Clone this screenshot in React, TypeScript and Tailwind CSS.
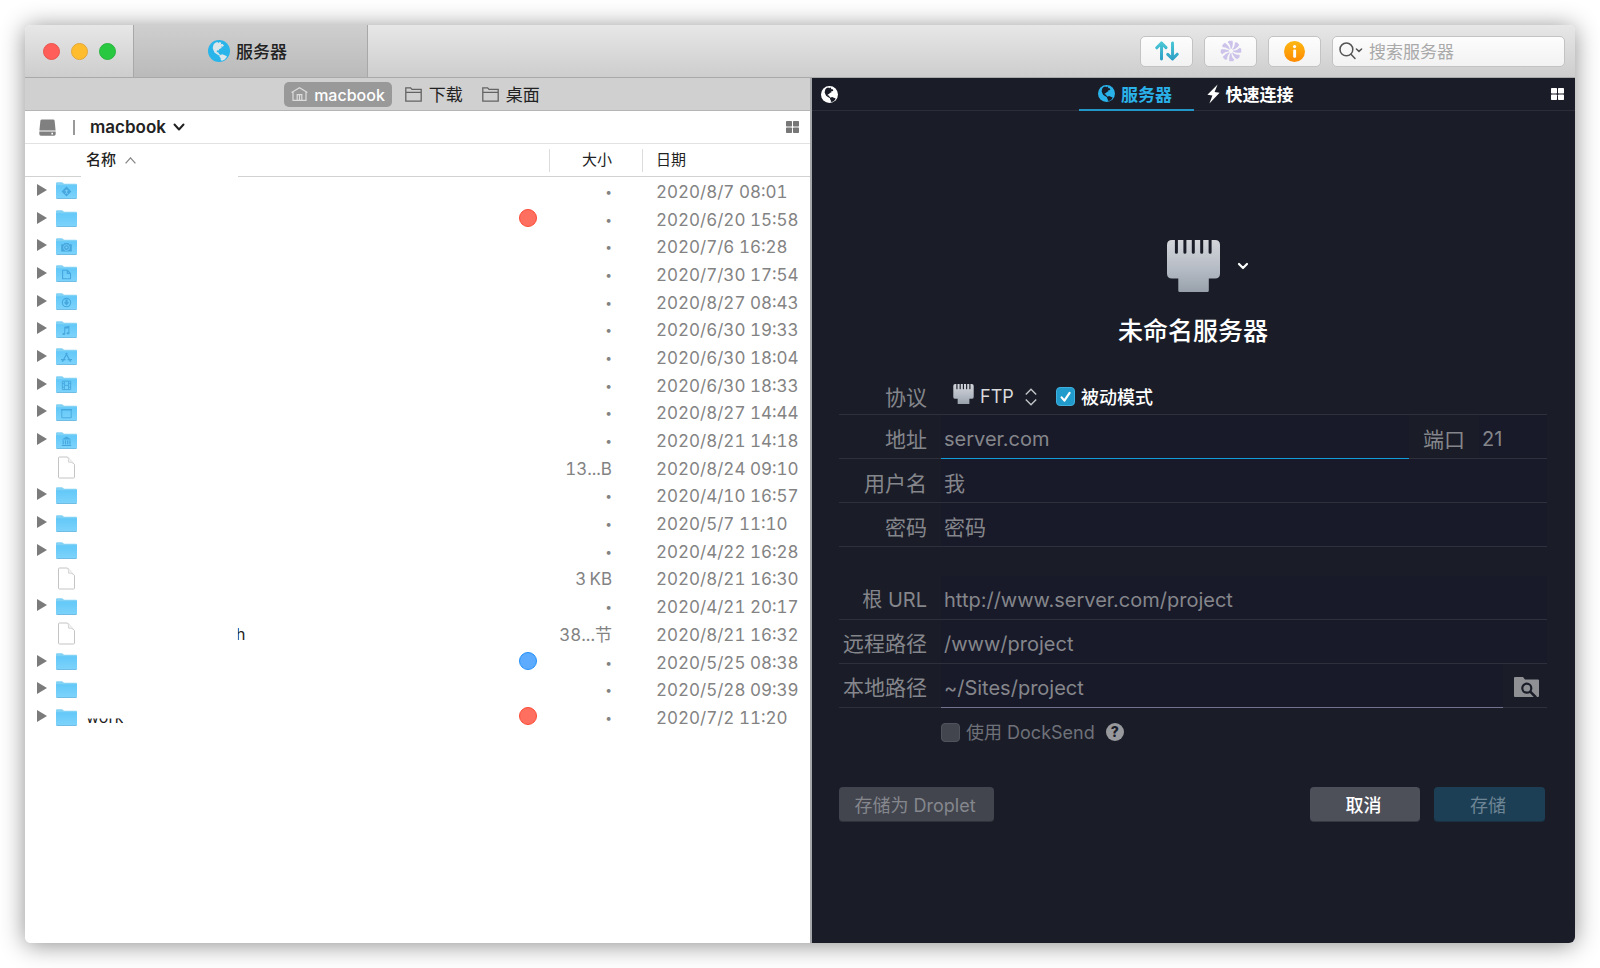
import { useId, type ReactNode } from "react";

type Glyph =
  | "public" | "pictures" | "documents" | "downloads" | "music"
  | "apps" | "movies" | "desktop" | "library";

type Entry = {
  kind: "folder" | "file";
  glyph?: Glyph;
  tag?: "red" | "blue";
  size: string;
  date: string;
  name?: ReactNode;
};

const entries: Entry[] = [
  { kind: "folder", glyph: "public", size: "•", date: "2020/8/7 08:01" },
  { kind: "folder", tag: "red", size: "•", date: "2020/6/20 15:58" },
  { kind: "folder", glyph: "pictures", size: "•", date: "2020/7/6 16:28" },
  { kind: "folder", glyph: "documents", size: "•", date: "2020/7/30 17:54" },
  { kind: "folder", glyph: "downloads", size: "•", date: "2020/8/27 08:43" },
  { kind: "folder", glyph: "music", size: "•", date: "2020/6/30 19:33" },
  { kind: "folder", glyph: "apps", size: "•", date: "2020/6/30 18:04" },
  { kind: "folder", glyph: "movies", size: "•", date: "2020/6/30 18:33" },
  { kind: "folder", glyph: "desktop", size: "•", date: "2020/8/27 14:44" },
  { kind: "folder", glyph: "library", size: "•", date: "2020/8/21 14:18" },
  { kind: "file", size: "13...B", date: "2020/8/24 09:10" },
  { kind: "folder", size: "•", date: "2020/4/10 16:57" },
  { kind: "folder", size: "•", date: "2020/5/7 11:10" },
  { kind: "folder", size: "•", date: "2020/4/22 16:28" },
  { kind: "file", size: "3\u2009KB", date: "2020/8/21 16:30" },
  { kind: "folder", size: "•", date: "2020/4/21 20:17" },
  {
    kind: "file",
    size: "38...节",
    date: "2020/8/21 16:32",
    name: <span className="ml-[150px] [clip-path:inset(0_0_0_20%)]">h</span>,
  },
  { kind: "folder", tag: "blue", size: "•", date: "2020/5/25 08:38" },
  { kind: "folder", size: "•", date: "2020/5/28 09:39" },
  {
    kind: "folder",
    tag: "red",
    size: "•",
    date: "2020/7/2 11:20",
    name: <span className="[clip-path:inset(56%_0_0_0)]">work</span>,
  },
];

function Globe({ className, land }: { className: string; land: string }) {
  return (
    <svg viewBox="0 0 66 66" className={className} aria-hidden="true">
      <circle cx="33" cy="33" r="33" fill="currentColor" />
      <path
        fill={land}
        d="M17 13 L22 8 L28 6 L32 9 L35 6 L40 8 L38 13 L44 12 L48 17 L44 20 L40 19 L41 24 L34 27 L31 32 L27 31 L26 37 L31 37 L33 42 L38 45 L34 47 L27 43 L20 38 L17 32 L14 24 Z"
      />
      <path fill={land} d="M36 46 L43 43 L50 46 L57 49 L54 54 L49 59 L42 62 L38 60 L38 54 L34 50 Z" />
    </svg>
  );
}

function FolderGlyph({ glyph }: { glyph: Glyph }) {
  switch (glyph) {
    case "public":
      return (
        <g>
          <path fill="#45a7de" d="M10.5 4.6 L15.4 9.5 L10.5 14.4 L5.6 9.5Z" />
          <path stroke="#7fd0fb" strokeWidth="0.8" fill="none" d="M8.8 8.8h3.4 M10.5 7.6v2.6 L9.4 12.2 M10.5 10.2 L11.7 12.2" />
        </g>
      );
    case "pictures":
      return (
        <g>
          <path fill="#45a7de" d="M5.2 6.3h2.4l1-1.3h3.8l1 1.3h2.4V13.4H5.2Z" />
          <circle cx="10.5" cy="9.6" r="2.9" fill="#45a7de" stroke="#7fd0fb" strokeWidth="0.8" />
          <circle cx="10.5" cy="9.6" r="1" fill="#7fd0fb" />
        </g>
      );
    case "documents":
      return <path fill="none" stroke="#45a7de" strokeWidth="1.1" d="M6.6 5.2h4.7l3.2 3.2v5.4H6.6Z M11.3 5.2v3.2h3.2" />;
    case "downloads":
      return (
        <g>
          <circle cx="10.5" cy="9.6" r="4.2" fill="none" stroke="#45a7de" strokeWidth="1.1" />
          <path fill="#45a7de" d="M9.4 6.4h2.2v2.8h1.8l-2.9 3.2-2.9-3.2h1.8Z" />
        </g>
      );
    case "music":
      return (
        <g fill="#45a7de">
          <path d="M8.2 5.8 L13.4 4.8 V12.2 H12.4 V7.2 L9.2 7.8 V13 H8.2Z" />
          <ellipse cx="7.8" cy="13" rx="1.5" ry="1.1" />
          <ellipse cx="12" cy="12.3" rx="1.5" ry="1.1" />
        </g>
      );
    case "apps":
      return <path fill="none" stroke="#45a7de" strokeWidth="1.3" d="M11.2 5 L6.4 13.8 M9.8 5 L14.6 13.8 M5 11.7h4.6 M11.6 11.7h4.4" />;
    case "movies":
      return (
        <path
          fill="none"
          stroke="#45a7de"
          strokeWidth="0.9"
          d="M6.3 5.2h8.4v8.4H6.3Z M8.4 5.2v8.4 M12.6 5.2v8.4 M8.4 9.4h4.2 M6.3 7.6h2 M6.3 11.2h2 M12.7 7.6h2 M12.7 11.2h2"
        />
      );
    case "desktop":
      return (
        <g>
          <path fill="none" stroke="#45a7de" strokeWidth="0.9" d="M5.8 5.6h9.4v8.2H5.8Z" />
          <path fill="#45a7de" d="M5 5h11v1.4H5Z" />
        </g>
      );
    case "library":
      return (
        <g fill="#45a7de">
          <path d="M10.5 4.6 L15.4 7.4 H5.6Z" />
          <path d="M6.6 8.2h1.2v4.4H6.6Z M8.9 8.2h1.2v4.4H8.9Z M11.1 8.2h1.2v4.4h-1.2Z M13.3 8.2h1.2v4.4h-1.2Z M5.8 13.1h9.4v1H5.8Z" />
        </g>
      );
  }
}

function FolderIcon({ glyph }: { glyph?: Glyph }) {
  const id = useId();
  return (
    <svg viewBox="0 0 21 17" className="mt-[2px] h-[17px] w-[21px]" aria-hidden="true">
      <defs>
        <linearGradient id={id} x1="0" y1="0" x2="0" y2="1">
          <stop offset="0" stopColor="#62c8f8" />
          <stop offset="1" stopColor="#7dd3fb" />
        </linearGradient>
      </defs>
      <path fill="#82d2f6" d="M0 1.3 Q0 0.3 1 0.3 H5.6 Q6.6 0.3 7.4 1.2 L8 1.7 H20 Q21 1.7 21 2.7 V6 H0Z" />
      <path fill={`url(#${id})`} d="M0 3.2 H21 V15.6 Q21 16.4 20 16.4 H1 Q0 16.4 0 15.6Z" />
      <path fill="#55aedb" d="M0 15.4 Q0.2 16 1 16 H20 Q20.8 16 21 15.4 V15.8 Q21 16.8 20 16.8 H1 Q0 16.8 0 15.8Z" />
      {glyph && <FolderGlyph glyph={glyph} />}
    </svg>
  );
}

function FileIcon() {
  return (
    <svg viewBox="0 0 21 23" className="mt-[2px] h-[23px] w-[21px]" aria-hidden="true">
      <path fill="#fff" stroke="#c4c4c4" strokeWidth="1" d="M2.5 2 Q2.5 1 3.5 1 H11.5 L18.5 8.5 V21 Q18.5 22 17.5 22 H3.5 Q2.5 22 2.5 21Z" />
      <path fill="#f4f4f4" stroke="#cfcfcf" strokeWidth="0.9" d="M11.5 1 C12.8 3 12.3 4.5 12.6 6.2 C14.8 6 16.8 6.6 18.5 8.5" />
    </svg>
  );
}

function Plug({ className }: { className: string }) {
  const id = useId();
  return (
    <svg viewBox="0 0 53 52" className={className} aria-hidden="true">
      <defs>
        <linearGradient id={id} x1="0" y1="0" x2="0" y2="1">
          <stop offset="0" stopColor="#d3d5da" />
          <stop offset="0.55" stopColor="#b6bcc5" />
          <stop offset="1" stopColor="#98a1ab" />
        </linearGradient>
      </defs>
      <path
        fill={`url(#${id})`}
        d="M5 0 H7.9 V12.4 Q7.9 13.8 9.4 13.8 T10.9 12.4 V0 H16.4 V12.4 Q16.4 13.8 17.9 13.8 T19.4 12.4 V0 H24.8 V12.4 Q24.8 13.8 26.3 13.8 T27.8 12.4 V0 H33.2 V12.4 Q33.2 13.8 34.7 13.8 T36.2 12.4 V0 H41.6 V12.4 Q41.6 13.8 43.1 13.8 T44.6 12.4 V0 H48 Q53 0 53 5 V33.5 Q53 38.5 48 38.5 H41.8 V50.5 Q41.8 52 40.3 52 H12.8 Q11.3 52 11.3 50.5 V38.5 H5 Q0 38.5 0 33.5 V5 Q0 0 5 0Z"
      />
    </svg>
  );
}

function GridIcon({ className }: { className: string }) {
  return (
    <svg viewBox="0 0 13 12" className={className} fill="currentColor" aria-hidden="true">
      <rect x="0" y="0" width="6" height="5.4" rx="0.7" />
      <rect x="7" y="0" width="6" height="5.4" rx="0.7" />
      <rect x="0" y="6.6" width="6" height="5.4" rx="0.7" />
      <rect x="7" y="6.6" width="6" height="5.4" rx="0.7" />
    </svg>
  );
}

function SmallFolder() {
  return (
    <svg viewBox="0 0 17 15" className="h-[15px] w-[17px] text-[#636363]" fill="none" stroke="currentColor" strokeWidth="1.3" aria-hidden="true">
      <path d="M0.8 14.2 V0.8 H5.6 L7 2.4 H16.2 V14.2Z M0.8 5.4 H16.2" />
    </svg>
  );
}

function TitleBar() {
  return (
    <header className="flex h-[53px] items-stretch border-b border-[#a9a9a9] bg-linear-to-b from-[#e7e7e7] to-[#cdcdcd]">
      <div className="flex w-[108px] items-center gap-[11px] pl-[18px]">
        <button aria-label="关闭" className="size-[17px] rounded-full border border-[#e9544d] bg-[#ff5f58]" />
        <button aria-label="最小化" className="size-[17px] rounded-full border border-[#e2a73a] bg-[#ffbd2e]" />
        <button aria-label="缩放" className="size-[17px] rounded-full border border-[#2bb440] bg-[#28c941]" />
      </div>
      <button className="flex w-[235px] items-center justify-center gap-[6px] border-x border-[#a8a8a8] bg-linear-to-b from-[#cfcfcf] to-[#bababa] pr-[6px] text-[17px] font-medium text-[#222]">
        <Globe className="size-[22px] text-[#29b5ea]" land="#dbe6ea" />
        <span className="pt-[3px]">服务器</span>
      </button>
      <div className="flex flex-1 items-center justify-end gap-[11px] pr-[10px]">
        <button aria-label="传输" className="grid h-[31px] w-[53px] place-items-center rounded-[5px] border border-[#c3c3c3] bg-linear-to-b from-[#fdfdfd] to-[#f2f2f2]">
          <svg viewBox="0 0 24 20" className="h-5 w-6" fill="none" strokeWidth="3" strokeLinecap="round" strokeLinejoin="round" aria-hidden="true">
            <defs>
              <linearGradient id="transfer" gradientUnits="userSpaceOnUse" x1="0" y1="0" x2="0" y2="20">
                <stop offset="0" stopColor="#4ccad6" />
                <stop offset="1" stopColor="#2b9cc4" />
              </linearGradient>
            </defs>
            <path stroke="url(#transfer)" d="M6.5 18 L6.6 2 M1.8 6.8 L6.5 2 L11 6.6 M17.5 2 L17.6 18 M12.8 13.4 L17.5 18 L22.2 13.2" />
          </svg>
        </button>
        <button aria-label="同步" className="grid h-[31px] w-[53px] place-items-center rounded-[5px] border border-[#c3c3c3] bg-linear-to-b from-[#fdfdfd] to-[#f2f2f2]">
          <svg viewBox="0 0 22 22" className="size-[22px]" fill="#cdc3ea" aria-hidden="true">
            {[0, 45, 90, 135, 180, 225, 270, 315].map((angle) => (
              <path key={angle} transform={`rotate(${angle} 11 11)`} d="M10.6 9 C10.6 6.2 9.8 4 7.8 2.4 Q8 1 9.4 0.7 L12.6 0.8 C13.2 4 12.6 6.8 11.4 9Z" />
            ))}
          </svg>
        </button>
        <button aria-label="信息" className="grid h-[31px] w-[53px] place-items-center rounded-[5px] border border-[#c3c3c3] bg-linear-to-b from-[#fdfdfd] to-[#f2f2f2]">
          <svg viewBox="0 0 21 21" className="size-[21px]" aria-hidden="true">
            <defs>
              <linearGradient id="info" x1="0" y1="0" x2="0" y2="1">
                <stop offset="0" stopColor="#fdb813" />
                <stop offset="1" stopColor="#ff8a00" />
              </linearGradient>
            </defs>
            <circle cx="10.5" cy="10.5" r="10.5" fill="url(#info)" />
            <circle cx="10.6" cy="5.6" r="1.6" fill="#fff" />
            <rect x="9.2" y="8.6" width="2.9" height="8.2" rx="1.2" fill="#fff" />
          </svg>
        </button>
        <label className="flex h-[31px] w-[233px] items-center gap-[6px] rounded-[5px] border border-[#c3c3c3] bg-linear-to-b from-[#fdfdfd] to-[#f2f2f2] pl-[6px]">
          <svg viewBox="0 0 24 18" className="h-[18px] w-6 shrink-0" fill="none" stroke="#555" strokeWidth="1.5" strokeLinecap="round" strokeLinejoin="round" aria-hidden="true">
            <circle cx="7.4" cy="7.4" r="6.4" />
            <path d="M12 12.2 L16 16.4 M17.4 7 L20 9.4 L22.6 7" />
          </svg>
          <input type="search" aria-label="搜索服务器" placeholder="搜索服务器" className="min-w-0 flex-1 bg-transparent pt-[3px] text-[17px] outline-none placeholder:text-[#a9a9a9]" />
        </label>
      </div>
    </header>
  );
}

function LocalPane() {
  return (
    <section className="flex min-w-0 flex-col border-r-2 border-[#a5a7aa] bg-white">
      <nav className="flex h-[33px] items-center justify-center gap-[13px] border-b border-[#b5b5b5] bg-[#d0d0d0] pr-[11px] text-[17px] text-[#222]">
        <button className="flex h-[25px] items-center gap-[6px] rounded-[5px] bg-[#999] px-[7px] text-[16px] font-medium text-white">
          <svg viewBox="0 0 17 14" className="h-[14px] w-[17px]" fill="none" stroke="#dcdcdc" strokeWidth="1.2" aria-hidden="true">
            <path d="M0.6 5.4 L8.5 0.8 L16.4 5.4 M2 4.8 V13.3 H15 V4.8 M6.2 13.3 V7.6 H10.8 V13.3 M8.5 8 V13" />
          </svg>
          <span className="pt-[2px]">macbook</span>
        </button>
        <button className="flex items-center gap-[7px]"><SmallFolder /><span className="pt-[3px]">下载</span></button>
        <button className="ml-[6px] flex items-center gap-[7px]"><SmallFolder /><span className="pt-[3px]">桌面</span></button>
      </nav>
      <div className="flex h-[33px] items-center border-b border-[#e2e2e2] pr-[11px] pl-[14px]">
        <svg viewBox="0 0 17 17" className="size-[17px] text-[#808080]" fill="currentColor" aria-hidden="true">
          <path d="M3 0.4 H14 Q15.4 0.4 15.6 1.8 L16.6 11.4 H0.4 L1.4 1.8 Q1.6 0.4 3 0.4Z" />
          <path fillRule="evenodd" d="M0.3 12.4 H16.7 V15 Q16.7 16.8 15 16.8 H2 Q0.3 16.8 0.3 15Z M12.4 13.8 V15.4 H14 V13.8Z" />
        </svg>
        <span className="ml-[17px] h-[15px] w-[2px] bg-[#999]" />
        <button className="ml-[15px] flex items-center gap-[7px] text-[17px] font-semibold text-[#222]">
          <span className="pt-[2px]">macbook</span>
          <svg viewBox="0 0 12 8" className="h-2 w-3" fill="none" stroke="currentColor" strokeWidth="2" strokeLinecap="round" strokeLinejoin="round" aria-hidden="true">
            <path d="M1.5 1.5 L6 6.5 L10.5 1.5" />
          </svg>
        </button>
        <button aria-label="显示方式" className="ml-auto text-[#777]">
          <GridIcon className="h-3 w-[13px]" />
        </button>
      </div>
      <table className="h-[587px] w-full table-fixed border-separate border-spacing-0">
        <colgroup>
          <col />
          <col className="w-[44px]" />
          <col className="w-[93px]" />
          <col className="w-[168px]" />
        </colgroup>
        <thead>
          <tr className="h-[33px] text-[15px] text-[#222]">
            <th scope="col" className="relative border-b border-[#d2d2d2] p-0 pl-[61px] text-left font-medium">
              <span className="flex items-center gap-[9px]">
                名称
                <svg viewBox="0 0 11 7" className="h-[7px] w-[11px]" fill="none" stroke="#888" strokeWidth="1.3" aria-hidden="true">
                  <path d="M0.6 6.4 L5.5 0.9 L10.4 6.4" />
                </svg>
              </span>
              <span className="absolute -bottom-px left-[56px] h-px w-[157px] bg-white" />
            </th>
            <td className="border-b border-[#d2d2d2] p-0" />
            <th scope="col" className="border-b border-[#d2d2d2] p-0 font-normal">
              <span className="flex h-[23px] items-center justify-end border-l border-[#dcdcdc] pr-[30px]">大小</span>
            </th>
            <th scope="col" className="border-b border-[#d2d2d2] p-0 font-normal">
              <span className="flex h-[23px] items-center border-l border-[#dcdcdc] pl-[13px]">日期</span>
            </th>
          </tr>
        </thead>
        <tbody className="text-[17px] leading-6 text-[#838383] tabular-nums">
          {entries.map((entry, index) => (
            <tr key={index}>
              <td className="p-0">
                <div className="flex h-[26px] items-center pb-[2px] pl-3 text-[#222]">
                  <span className="w-[19px]">
                    {entry.kind === "folder" && (
                      <svg viewBox="0 0 10 12" className="h-3 w-[10px]" fill="#7b7b7b" aria-hidden="true">
                        <path d="M0 0 L10 6 L0 12Z" />
                      </svg>
                    )}
                  </span>
                  {entry.kind === "folder" ? <FolderIcon glyph={entry.glyph} /> : <FileIcon />}
                  <span className="flex pt-[2px] pl-[9px] text-[16px]">{entry.name}</span>
                </div>
              </td>
              <td className="p-0 pb-[2px]">
                {entry.tag === "red" && <span className="ml-[14px] block size-[18px] rounded-full border border-[#fb4a34] bg-[#ff6f5f]" />}
                {entry.tag === "blue" && <span className="ml-[14px] block size-[18px] rounded-full border border-[#2290fa] bg-[#5cabff]" />}
              </td>
              {entry.size === "•" ? (
                <td className="p-0 pt-[2px] pr-[30px] text-right text-[12px] leading-5">•</td>
              ) : (
                <td className="p-0 pt-[2px] pr-[30px] text-right">{entry.size}</td>
              )}
              <td className="p-0 pt-[2px] pl-[14px] whitespace-nowrap">{entry.date}</td>
            </tr>
          ))}
        </tbody>
      </table>
    </section>
  );
}

function Field({ id, label, placeholder, type = "text" }: { id: string; label: string; placeholder: string; type?: string }) {
  return (
    <div className="flex h-11">
      <label htmlFor={id} className="w-[102px] shrink-0 border-b border-[#2f303b] pt-[2px] pr-[14px] text-right leading-[46px]">{label}</label>
      <input
        id={id}
        type={type}
        placeholder={placeholder}
        className="min-w-0 flex-1 border-b border-[#2f303b] bg-[#181a29] px-[3px] pt-[6px] outline-none placeholder:text-[#85868b]"
      />
    </div>
  );
}

function ServerPane() {
  return (
    <section className="flex min-w-0 flex-col bg-[#1a1d28] text-white">
      <nav className="grid h-[33px] grid-cols-[1fr_auto_1fr] items-stretch border-b border-[#2c2d39] text-[17px] font-bold">
        <button aria-label="位置" className="justify-self-start pl-[9px]">
          <Globe className="size-[17px] text-white" land="#1a1d28" />
        </button>
        <div className="flex pr-[15px]">
          <button className="-mb-px flex w-[115px] items-center justify-center gap-[6px] border-b-2 border-[#2396c8] pr-[2px] text-[#2ab3ea]">
            <Globe className="size-[17px] text-[#2ab3ea]" land="#1a1d28" />
            <span className="pt-[4px]">服务器</span>
          </button>
          <button className="flex items-center gap-[6px] pl-[13px]">
            <svg viewBox="0 0 13 20" className="h-[20px] w-[13px]" fill="currentColor" aria-hidden="true">
              <path d="M10.6 0.6 L0.4 10.8 L5.4 11.6 L2.4 19.4 L12.6 8.8 L7.6 8Z" />
            </svg>
            <span className="pt-[3px]">快速连接</span>
          </button>
        </div>
        <button aria-label="显示方式" className="justify-self-end pr-[11px]">
          <GridIcon className="h-3 w-[13px]" />
        </button>
      </nav>

      <form className="flex flex-col pt-[129px] pr-7 pl-[27px] text-[21px] text-[#85868b]" onSubmit={(event) => event.preventDefault()}>
        <div className="grid grid-cols-[1fr_auto_1fr] items-center">
          <span />
          <Plug className="h-[52px] w-[53px]" />
          <button type="button" aria-label="选择图标" className="ml-[17px] w-3 text-white">
            <svg viewBox="0 0 12 8" className="h-2 w-3" fill="none" stroke="currentColor" strokeWidth="2.2" strokeLinecap="round" strokeLinejoin="round" aria-hidden="true">
              <path d="M2 2 L6 6 L10 2" />
            </svg>
          </button>
        </div>
        <h1 className="mt-[21px] text-center text-[25px] leading-9 font-medium text-white">未命名服务器</h1>

        <div className="mt-[32px] flex h-[34px] items-center border-b border-[#2f303b]">
          <label htmlFor="protocol" className="w-[102px] pr-[14px] text-right">协议</label>
          <div className="flex items-center gap-[6px] pl-3">
            <Plug className="mb-[7px] h-[20px] w-[21px]" />
            <div className="grid w-[57px] items-center pb-[2px]">
              <select id="protocol" className="col-start-1 row-start-1 appearance-none bg-transparent text-[18px] text-[#d9dadc] outline-none">
                <option>FTP</option>
              </select>
              <svg viewBox="0 0 12 18" className="pointer-events-none col-start-1 row-start-1 h-[18px] w-3 justify-self-end" fill="none" stroke="#c3c4c8" strokeWidth="1.4" aria-hidden="true">
                <path d="M0.8 6.4 L6 1.2 L11.2 6.4 M0.8 11.6 L6 16.8 L11.2 11.6" />
              </svg>
            </div>
          </div>
          <label className="ml-[19px] flex items-center gap-[6px] text-[18px] font-medium text-white">
            <span className="mb-[2px] grid size-[19px]">
              <input type="checkbox" defaultChecked className="col-start-1 row-start-1 size-[19px] appearance-none rounded-[4px] border border-[#3fb0df] bg-[#20607d] checked:bg-[#219bcb]" />
              <svg viewBox="0 0 19 19" className="pointer-events-none col-start-1 row-start-1 size-[19px]" fill="none" stroke="#fff" strokeWidth="2.2" strokeLinecap="round" strokeLinejoin="round" aria-hidden="true">
                <path d="M5.6 10.4 L8.4 13.6 L13.6 5.8" />
              </svg>
            </span>
            被动模式
          </label>
        </div>

        <div className="flex h-11">
          <label htmlFor="address" className="w-[102px] shrink-0 border-b border-[#2f303b] pt-[2px] pr-[14px] text-right leading-[46px]">地址</label>
          <input id="address" placeholder="server.com" className="min-w-0 flex-1 border-b border-b-[#129cd8] bg-[#181a29] px-[3px] pt-[5px] text-[20px] outline-none placeholder:text-[#85868b]" />
          <label htmlFor="port" className="w-[70px] border-b border-[#2f303b] pt-[2px] pl-[14px] leading-[46px]">端口</label>
          <input id="port" placeholder="21" className="w-[68px] border-b border-[#2f303b] bg-[#181a29] px-[3px] pt-[5px] text-[20px] outline-none placeholder:text-[#85868b]" />
        </div>
        <Field id="user" label="用户名" placeholder="我" />
        <Field id="password" label="密码" placeholder="密码" type="password" />

        <div className="mt-[29px]">
          <div className="flex h-11">
            <label htmlFor="root-url" className="w-[102px] shrink-0 border-b border-[#2f303b] pt-[2px] pr-[14px] text-right text-[20px] leading-[44px]">根 URL</label>
            <input id="root-url" placeholder="http://www.server.com/project" className="min-w-0 flex-1 border-b border-[#2f303b] bg-[#181a29] px-[3px] pt-[5px] text-[20px] outline-none placeholder:text-[#85868b]" />
          </div>
          <div className="flex h-11">
            <label htmlFor="remote" className="w-[102px] shrink-0 border-b border-[#2f303b] pt-[2px] pr-[14px] text-right leading-[44px]">远程路径</label>
            <input id="remote" placeholder="/www/project" className="min-w-0 flex-1 border-b border-[#2f303b] bg-[#181a29] px-[3px] pt-[5px] text-[20px] outline-none placeholder:text-[#85868b]" />
          </div>
          <div className="flex h-11">
            <label htmlFor="local" className="w-[102px] shrink-0 border-b border-[#2f303b] pt-[2px] pr-[14px] text-right leading-[44px]">本地路径</label>
            <input id="local" placeholder="~/Sites/project" className="min-w-0 flex-1 border-b border-b-[#72718e] bg-[#181a29] px-[3px] pt-[5px] text-[20px] outline-none placeholder:text-[#85868b]" />
            <button type="button" aria-label="选择本地路径" className="w-[44px] border-b border-[#2f303b] pt-[3px] pl-[11px]">
              <svg viewBox="0 0 25 20" className="h-5 w-[25px]" aria-hidden="true">
                <path fill="#8e9094" d="M0 1 Q0 0 1 0 H9 L11 2.6 H24 Q25 2.6 25 3.6 V19 Q25 20 24 20 H1 Q0 20 0 19Z" />
                <circle cx="12.8" cy="11.2" r="4.5" fill="none" stroke="#1a1d28" strokeWidth="2.2" />
                <path stroke="#1a1d28" strokeWidth="2.6" d="M16 14.4 L22 20.4" />
              </svg>
            </button>
          </div>
        </div>

        <div className="mt-3 flex h-6 items-center pl-[102px] text-[18px]">
          <label className="flex items-center gap-[6px] text-[#6f7179]">
            <input type="checkbox" className="size-[19px] appearance-none rounded-[4px] border border-[#51535c] bg-[#42444e]" />
            使用 DockSend
          </label>
          <button type="button" aria-label="帮助" className="ml-[11px] grid size-[18px] place-items-center rounded-full bg-[#98999d] text-[14px] leading-none font-extrabold text-[#1a1d28]">?</button>
        </div>

        <div className="mt-[43px] flex pr-[2px] text-[18px]">
          <button type="button" className="h-[35px] w-[155px] rounded-[4px] border-b border-[#30323b] bg-[#42454e] pt-[2px] pr-[3px] text-[#85878d]">存储为 Droplet</button>
          <button type="button" className="ml-auto h-[35px] w-[110px] rounded-[4px] border-b border-[#363842] bg-[#4d4f59] pt-[2px] pr-[3px] font-medium text-white">取消</button>
          <button type="submit" className="ml-[14px] h-[35px] w-[111px] rounded-[4px] border-b border-[#1a3142] bg-[#1d3f55] pt-[2px] pr-[3px] text-[#6d8594]">存储</button>
        </div>
      </form>
    </section>
  );
}

export default function App() {
  return (
    <main className="flex min-h-screen bg-white p-[25px] font-['Inter','Noto_Sans_CJK_SC',sans-serif]">
      <div className="flex min-w-0 flex-1 flex-col overflow-hidden rounded-[6px] shadow-[0_2px_24px_rgba(0,0,0,0.45)]">
        <TitleBar />
        <div className="grid flex-1 grid-cols-[787fr_763fr]">
          <LocalPane />
          <ServerPane />
        </div>
      </div>
    </main>
  );
}
